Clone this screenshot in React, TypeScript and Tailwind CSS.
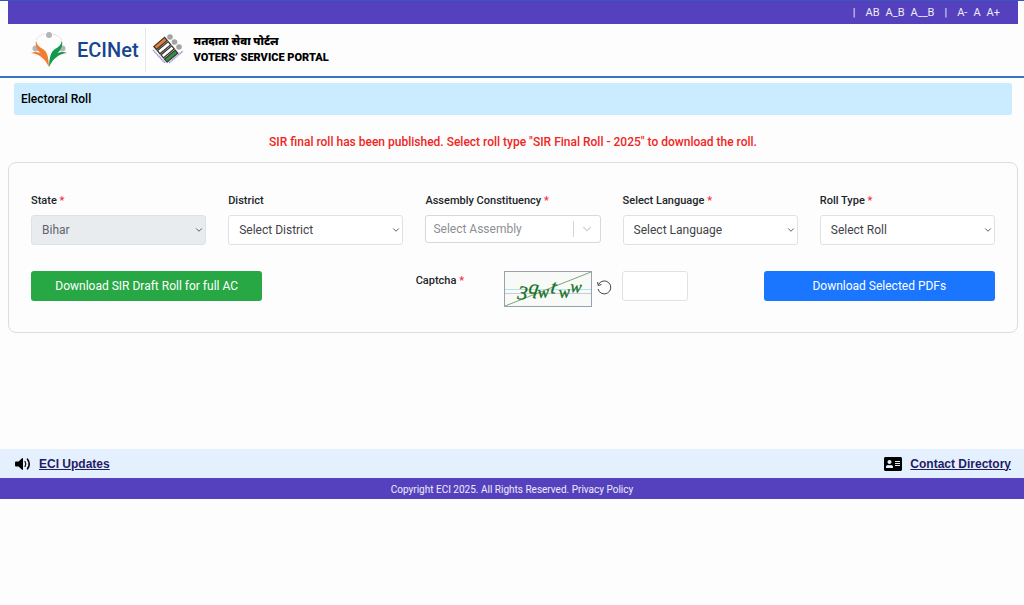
import { useState } from 'react';
import type { ReactNode } from 'react';
import { ChevronDown } from 'lucide-react';
import { FaAddressCard } from 'react-icons/fa';

const CAPTCHA_CHARS = [
  { char: '3', x: 12, y: 27, rotate: 6, size: 20 },
  { char: 'q', x: 23, y: 21, rotate: 8, size: 20 },
  { char: 'w', x: 33, y: 26, rotate: -4, size: 17 },
  { char: 't', x: 45, y: 21, rotate: 8, size: 20 },
  { char: 'w', x: 54, y: 26, rotate: -4, size: 17 },
  { char: 'w', x: 65, y: 20, rotate: 4, size: 17 },
];

function EciNetLogo() {
  return (
    <svg className="w-9 h-9" viewBox="0 0 36 36" aria-hidden="true">
      <g fill="none" stroke="#dcdce0" strokeWidth="0.8">
        <path d="M5 8C7 4 11 2 14 2" />
        <path d="M22 2c4 1 7 3 9 6" />
      </g>
      <circle cx="18" cy="3" r="3" fill="#b5b5b8" />
      <circle cx="4.500" cy="16.500" r="3" fill="#b5b5b8" />
      <circle cx="31.500" cy="16.500" r="3" fill="#b5b5b8" />
      <path d="M5 8.500C6 13 8 15 12 17C16 20 17.500 24 18 35C14 27 9 22 0 21C4 19.500 7 20 10 21.500C6 18 4 14 5 8.500Z" fill="#ef7d32" />
      <path d="M31 8.500C30 13 28 15 24 17C20 20 18.500 24 18 35C22 27 27 22 36 21C32 19.500 29 20 26 21.500C30 18 32 14 31 8.500Z" fill="#11984a" />
    </svg>
  );
}

function VoterLogo() {
  return (
    <svg className="w-8 h-8" viewBox="0 0 32 32" aria-hidden="true">
      <circle cx="18" cy="3" r="2.800" fill="#a3a3a6" />
      <circle cx="22.500" cy="8" r="2.800" fill="#a3a3a6" />
      <circle cx="27" cy="13" r="2.800" fill="#a3a3a6" />
      <g transform="rotate(-40 14 16)" stroke="#3d3833" strokeWidth="1.300">
        <rect x="7" y="5.500" width="14" height="4" fill="#ef7d32" />
        <rect x="7" y="11" width="14" height="4" fill="#fff" />
        <rect x="7" y="16.500" width="14" height="4" fill="#fff" />
        <rect x="7" y="22" width="14" height="4" fill="#2f9444" />
      </g>
      <path d="M1 16l12 13M17 29l14-12" stroke="#9a94d6" strokeWidth="1.500" strokeDasharray="1.500 0.500" />
    </svg>
  );
}

function SpeakerIcon() {
  return (
    <svg className="w-4 h-4" viewBox="0 0 16 16" aria-hidden="true">
      <path d="M1 5.500h2.500L7 2.200Q8 1.800 8 3v10q0 1.200-1 0.800L3.500 10.500H1Q0 10.500 0 9.500v-3Q0 5.500 1 5.500Z" fill="#000" />
      <path d="M10 5.500q1.600 2.500 0 5" fill="none" stroke="#000" strokeWidth="1.200" strokeLinecap="round" />
      <path d="M12.500 3.200q3.400 4.800 0 9.600" fill="none" stroke="#000" strokeWidth="1.600" strokeLinecap="round" />
    </svg>
  );
}

function Captcha() {
  return (
    <svg className="w-[88px] h-9 border border-gray-400 bg-[#f8faf8]" viewBox="0 0 86 34" role="img" aria-label="Captcha">
      <path d="M0 17.500h86" stroke="#b5e3e3" />
      <path d="M0 21.500h86" stroke="#c9c9e0" />
      <path d="M0 34L86 0" stroke="#7fa37f" />
      {CAPTCHA_CHARS.map((item) => (
        <text
          key={item.x}
          x={item.x}
          y={item.y}
          transform={`rotate(${item.rotate} ${item.x} ${item.y})`}
          fill="#17701f"
          stroke="#17701f"
          strokeWidth="0.3"
          fontFamily="'Liberation Serif', serif"
          fontStyle="italic"
          fontSize={item.size}
        >
          {item.char}
        </text>
      ))}
    </svg>
  );
}

interface FieldProps {
  id: string;
  label: string;
  required?: boolean;
  children: ReactNode;
}

function Field({ id, label, required, children }: FieldProps) {
  return (
    <div className="min-w-0">
      <label htmlFor={id} className="block mb-1.5 text-[11px] leading-4 font-medium">
        {label} {required && <span className="text-red-500">*</span>}
      </label>
      {children}
    </div>
  );
}

interface SelectProps {
  id: string;
  text: string;
  disabled?: boolean;
}

function Select({ id, text, disabled }: SelectProps) {
  return (
    <div className="relative">
      <select
        id={id}
        disabled={disabled}
        className="block w-full h-[30px] pl-2.5 pr-5 appearance-none rounded-[3px] border border-[#dee2e6] bg-white text-xs text-[#3f4347] disabled:bg-[#e9ecef] disabled:text-[#5f6469] disabled:opacity-100"
      >
        <option>{text}</option>
      </select>
      <ChevronDown className="absolute right-0.5 top-2.5 w-2.5 h-2.5 text-gray-700 pointer-events-none" />
    </div>
  );
}

export default function App() {
  const [assembly, setAssembly] = useState('');
  const [captcha, setCaptcha] = useState('');

  return (
    <div className="min-h-screen bg-[#fdfdfd] font-['Roboto','Noto_Sans_Devanagari','Noto_Sans',sans-serif] text-[#212529]">
      <div className="border-t border-[#3a56bd]">
        <div className="flex justify-end items-center gap-1.5 h-[23px] ml-2 mr-1.5 pt-0.5 pr-[18px] bg-[#5541bd] text-[11px] text-white/90">
          <span className="mr-1">|</span>
          <button type="button">AB</button>
          <button type="button">A_B</button>
          <button type="button">A__B</button>
          <span className="mx-1">|</span>
          <button type="button">A-</button>
          <button type="button">A</button>
          <button type="button">A+</button>
        </div>
      </div>

      <header className="flex items-center h-[54px] pl-[31px] border-b-2 border-[#3d73c4]">
        <EciNetLogo />
        <span className="ml-2.5 text-xl leading-6 font-medium text-[#17458f]">ECINet</span>
        <div className="h-11 mx-1.5 border-l border-gray-200" />
        <VoterLogo />
        <div className="ml-2.5 text-[11px] leading-4 font-black text-black">
          <p>मतदाता सेवा पोर्टल</p>
          <p>VOTERS’ SERVICE PORTAL</p>
        </div>
      </header>

      <main className="pl-2 pr-1.5 pt-[5px] pb-[116px]">
        <h1 className="mx-1.5 px-[7px] py-2 rounded-xs bg-[#cbebff] text-xs leading-4 font-medium text-black">Electoral Roll</h1>

        <p className="pt-[19px] pb-3 text-center text-xs leading-4 font-medium text-[#f0261e]">
          SIR final roll has been published. Select roll type "SIR Final Roll - 2025" to download the roll.
        </p>

        <form className="px-[22px] pt-[30px] pb-[25px] rounded-lg border border-[#dcdde0]" onSubmit={(e) => e.preventDefault()}>
          <div className="grid grid-cols-5 gap-[22px]">
            <Field id="state" label="State" required>
              <Select id="state" text="Bihar" disabled />
            </Field>
            <Field id="district" label="District">
              <Select id="district" text="Select District" />
            </Field>
            <Field id="assembly" label="Assembly Constituency" required>
              <div className="flex items-center h-7 rounded-[3px] border border-[#d5d8dc] bg-white">
                <input
                  id="assembly"
                  type="text"
                  placeholder="Select Assembly"
                  className="flex-1 min-w-0 pl-[7px] bg-transparent text-xs placeholder-[#8d9094] focus:outline-none"
                  value={assembly}
                  onChange={(e) => setAssembly(e.target.value)}
                />
                <span className="h-4 border-l border-gray-300" />
                <ChevronDown className="w-3.5 h-3.5 mx-1.5 text-gray-300" />
              </div>
            </Field>
            <Field id="language" label="Select Language" required>
              <Select id="language" text="Select Language" />
            </Field>
            <Field id="roll" label="Roll Type" required>
              <Select id="roll" text="Select Roll" />
            </Field>
          </div>

          <div className="flex items-start mt-[26px]">
            <button type="submit" className="w-[24%] h-[30px] rounded-[3px] bg-[#28a745] text-xs text-white">
              Download SIR Draft Roll for full AC
            </button>
            <div className="flex flex-1 justify-end items-start pr-[76px]">
              <label htmlFor="captcha" className="w-[88px] pt-0.5 text-[11px] leading-4 font-medium">
                Captcha <span className="text-red-500">*</span>
              </label>
              <Captcha />
              <button type="button" aria-label="Refresh captcha" className="ml-1 mr-2.5 mt-2">
                <svg className="w-4 h-4" viewBox="0 0 16 16" fill="none" stroke="#444" strokeWidth="1">
                  <path d="M2.500 5.500A6.500 6.500 0 1 1 2 10" />
                  <path d="M1.500 3L2.200 6.500L5.500 5.500" />
                </svg>
              </button>
              <input
                id="captcha"
                type="text"
                className="w-[66px] h-[30px] px-2 rounded-[3px] border border-[#dee2e6] bg-white text-xs"
                value={captcha}
                onChange={(e) => setCaptcha(e.target.value)}
              />
            </div>
            <button type="submit" className="w-[24%] h-[30px] rounded-[3px] bg-[#1a75ff] text-xs text-white">
              Download Selected PDFs
            </button>
          </div>
        </form>
      </main>

      <footer>
        <div className="flex justify-between items-center h-[29px] pl-[15px] pr-[13px] bg-[#e5f0ff] font-['Liberation_Sans',sans-serif] text-xs font-bold text-[#1f1c63]">
          <a href="#updates" className="flex items-center gap-2">
            <SpeakerIcon />
            <span className="underline">ECI Updates</span>
          </a>
          <a href="#contact" className="flex items-center gap-2">
            <FaAddressCard className="w-[18px] h-4 text-black" />
            <span className="underline">Contact Directory</span>
          </a>
        </div>
        <div className="h-[21px] bg-[#5541bd] text-center text-[10px] leading-6 text-white/90">
          Copyright ECI 2025. All Rights Reserved. <a href="#privacy">Privacy Policy</a>
        </div>
      </footer>
    </div>
  );
}
